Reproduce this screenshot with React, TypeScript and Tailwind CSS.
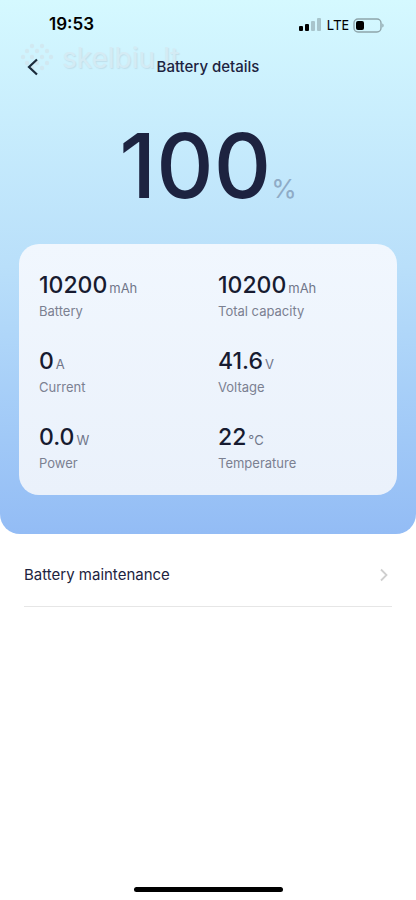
import React from "react";

const stats = [
  { value: "10200", unit: "mAh", label: "Battery" },
  { value: "10200", unit: "mAh", label: "Total capacity" },
  { value: "0", unit: "A", label: "Current" },
  { value: "41.6", unit: "V", label: "Voltage" },
  { value: "0.0", unit: "W", label: "Power" },
  { value: "22", unit: "°C", label: "Temperature" },
];

const StatusBar = () => (
  <div className="flex h-[50px] items-center justify-between pl-[49px] pr-8">
    <span className="text-[17px] font-semibold text-black">19:53</span>
    <div className="flex items-center text-black">
      <svg width="23" height="14" viewBox="0 0 23 14" fill="currentColor">
        <rect x="0" y="8" width="4" height="5" rx="1" />
        <rect x="6" y="6" width="4" height="7" rx="1" />
        <rect x="12" y="3" width="4" height="10" rx="1" opacity="0.2" />
        <rect x="18" y="0" width="4" height="13" rx="1" opacity="0.2" />
      </svg>
      <span className="ml-1 font-['Noto_Sans',sans-serif] text-sm">LTE</span>
      <svg className="ml-1" width="31" height="15" viewBox="0 0 31 15">
        <rect x="1" y="1" width="27" height="13" rx="4" fill="none" stroke="#8fa5ab" strokeWidth="1.4" />
        <rect x="3" y="3" width="8" height="9" rx="2" fill="#000" />
        <path d="M29.3 5.5v4c.9-.4 1.3-1.1 1.3-2s-.4-1.6-1.3-2z" fill="#8fa5ab" />
      </svg>
    </div>
  </div>
);

const Watermark = () => (
  <div className="pointer-events-none absolute left-5 top-[42px] flex items-center gap-2 opacity-60">
    <svg width="34" height="32" viewBox="0 0 34 32" fill="#d3e2ea">
      <circle cx="12" cy="4" r="2.2" />
      <circle cx="22" cy="4" r="2.2" />
      <circle cx="7" cy="9" r="2.2" />
      <circle cx="17" cy="9" r="2.2" />
      <circle cx="27" cy="9" r="2.2" />
      <circle cx="3" cy="15" r="2.2" />
      <circle cx="12" cy="15" r="2.2" />
      <circle cx="22" cy="15" r="2.2" />
      <circle cx="31" cy="15" r="2.2" />
      <circle cx="7" cy="21" r="2.2" />
      <circle cx="17" cy="21" r="2.2" />
      <circle cx="27" cy="21" r="2.2" />
      <circle cx="12" cy="26" r="2.2" />
      <circle cx="22" cy="26" r="2.2" />
    </svg>
    <span className="text-[28px] leading-8 text-[#d8e6ee] [text-shadow:1px_1px_1px_#b9d3df]">
      skelbiu.lt
    </span>
  </div>
);

const App = () => {
  return (
    <div className="flex min-h-screen flex-col bg-white font-[Inter,sans-serif] text-[#1d2340]">
      <header className="relative rounded-b-[20px] bg-linear-to-b from-[#d5f9ff] via-[#b9dffa] to-[#93bcf5] pb-[39px]">
        <StatusBar />
        <Watermark />
        <div className="relative grid h-[34px] grid-cols-[1fr_auto_1fr] items-center px-[26px]">
          <button aria-label="Back" className="w-4">
            <svg width="13" height="18" viewBox="0 0 13 18" fill="none" stroke="#1c2c3c" strokeWidth="2.2">
              <path d="M11 1.5 3 9l8 7.5" />
            </svg>
          </button>
          <h1 className="text-[15px] font-medium">Battery details</h1>
        </div>

        <div className="mt-6 flex h-[116px] items-baseline justify-center">
          <span className="text-[89px] leading-[116px] font-medium">100</span>
          <span className="text-[26px] text-[#8fabc6]">%</span>
        </div>

        <section className="mx-[19px] mt-5 grid grid-cols-[179px_1fr] gap-y-6 rounded-[20px] bg-linear-to-b from-[#f1f7fe] to-[#eaf1fb] px-5 pt-[25px] pb-[22px]">
          {stats.map((s) => (
            <div key={s.label}>
              <div className="flex h-8 items-baseline gap-0.5 leading-8">
                <span className="text-[23px] leading-8 font-medium text-[#171b30]">
                  {s.value}
                </span>
                <span className="text-[13px] text-[#70768a]">{s.unit}</span>
              </div>
              <div className="text-[13px] leading-5 text-[#7b8091]">{s.label}</div>
            </div>
          ))}
        </section>
      </header>

      <main className="mx-6 grow">
        <a href="#maintenance" className="flex h-[73px] items-center justify-between border-b border-[#e6e6e6] pt-2.5">
          <span className="text-[15px]">Battery maintenance</span>
          <svg className="mr-1" width="8" height="14" viewBox="0 0 8 14" fill="none" stroke="#cfcfcf" strokeWidth="1.8">
            <path d="m1 1.5 5.5 5.5L1 12.5" />
          </svg>
        </a>
      </main>

      <div className="mx-auto mb-2 h-[5px] w-[149px] rounded-full bg-black" />
    </div>
  );
};

export default App;
